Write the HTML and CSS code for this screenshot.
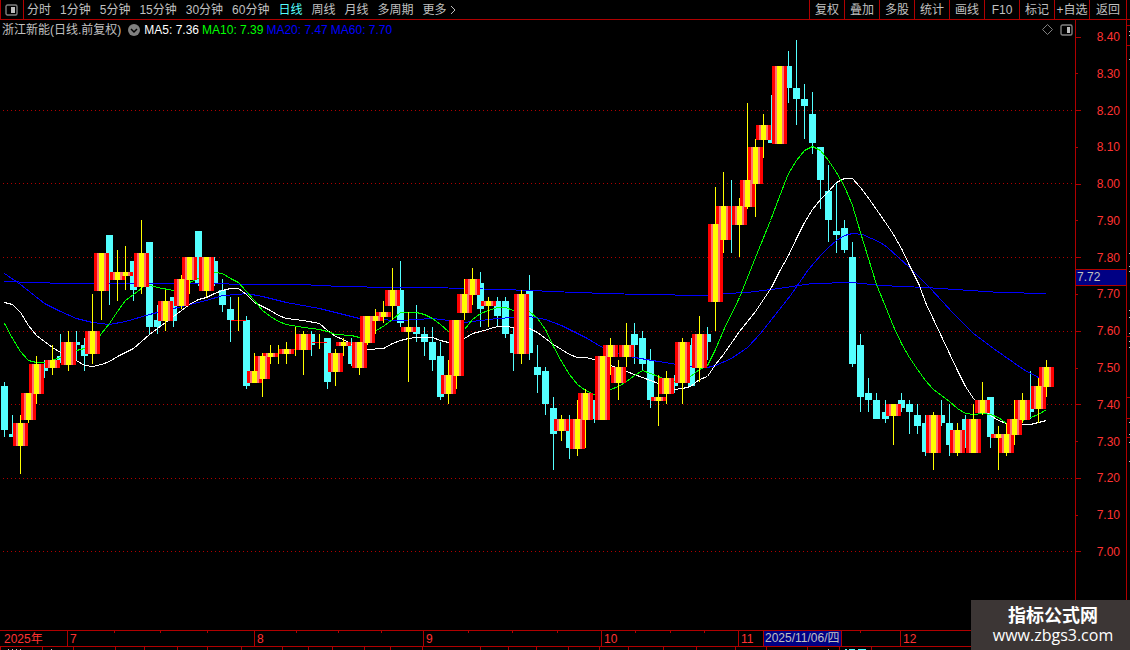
FILE: index.html
```html
<!DOCTYPE html>
<html lang="zh-CN">

<head>
    <meta charset="UTF-8">
    <meta name="viewport" content="width=device-width, initial-scale=1.0">
    <title>浙江新能 日线</title>
    <link rel="stylesheet" href="styles.css">
</head>

<body>
<header class="toolbar">
    <button class="panel-btn" aria-label="侧栏">
        <svg width="13" height="12" viewBox="0 0 13 12"><rect x="1" y="1" width="11" height="10" rx="1.5" fill="none" stroke="#808080" stroke-width="1.4"/><rect x="6" y="3" width="4" height="6" fill="#c0c0c0"/></svg>
    </button>
    <nav class="periods">
        <button>分时</button>
        <button>1分钟</button>
        <button>5分钟</button>
        <button>15分钟</button>
        <button>30分钟</button>
        <button>60分钟</button>
        <button class="active">日线</button>
        <button>周线</button>
        <button>月线</button>
        <button>多周期</button>
        <button class="more">更多<svg width="6" height="10" viewBox="0 0 6 10"><path d="M1 1l4 4-4 4" fill="none" stroke="#c0c0c0"/></svg></button>
    </nav>
    <div class="tools">
        <button>复权</button>
        <button>叠加</button>
        <button>多股</button>
        <button>统计</button>
        <button>画线</button>
        <button>F10</button>
        <button>标记</button>
        <button>+自选</button>
        <button>返回</button>
    </div>
</header>

<main class="main">
    <section class="chart">
        <svg id="plot" viewBox="0 20 1075 610" preserveAspectRatio="none"></svg>
        <div class="legend">
            <span class="stock">浙江新能(日线.前复权)</span>
            <svg class="arrow" width="12" height="12" viewBox="0 0 12 12"><circle cx="6" cy="6" r="6" fill="#808080"/><path d="M3 5l3 3 3-3" fill="none" stroke="#000" stroke-width="1.5"/></svg>
            <span class="ma5">MA5: 7.36</span>
            <span class="ma10">MA10: 7.39</span>
            <span class="ma20">MA20: 7.47</span>
            <span class="ma60">MA60: 7.70</span>
        </div>
        <div class="corner">
            <svg width="11" height="11" viewBox="0 0 11 11"><path d="M5.5 .5l5 5-5 5-5-5z" fill="none" stroke="#808080"/></svg>
            <svg width="13" height="12" viewBox="0 0 13 12"><rect x="1" y="1" width="11" height="10" rx="1.5" fill="none" stroke="#808080" stroke-width="1.4"/><rect x="7" y="3" width="3" height="6" fill="#c0c0c0"/></svg>
        </div>
    </section>
    <aside class="prices">
        <ul>
            <li class="major">8.40</li>
            <li>8.30</li>
            <li class="major">8.20</li>
            <li>8.10</li>
            <li class="major">8.00</li>
            <li>7.90</li>
            <li class="major">7.80</li>
            <li>7.70</li>
            <li class="major">7.60</li>
            <li>7.50</li>
            <li class="major">7.40</li>
            <li>7.30</li>
            <li class="major">7.20</li>
            <li>7.10</li>
            <li class="major">7.00</li>
        </ul>
        <div class="price-tag">7.72</div>
    </aside>
    <svg class="edge" id="edge" width="3" height="610" viewBox="0 20 3 610"></svg>
</main>

<div class="dates">
    <span>2025年</span>
    <span>7</span>
    <span>8</span>
    <span>9</span>
    <span>10</span>
    <span>11</span>
    <span>12</span>
    <svg class="ticks" id="date-ticks" viewBox="0 0 1130 15" preserveAspectRatio="none"></svg>
    <div class="date-tag">2025/11/06/四</div>
</div>
<svg class="footer" id="footer" viewBox="0 0 1130 3" preserveAspectRatio="none"></svg>

<div class="watermark">
    <strong>指标公式网</strong>
    <span>www.zbgs3.com</span>
</div>

<script src="chart.js"></script>
</body>

</html>
```
FILE: styles.css
```css
* {
    box-sizing: border-box;
}

body {
    margin: 0;
    height: 100vh;
    display: flex;
    flex-direction: column;
    overflow: hidden;
    background: #000;
    color: #c0c0c0;
    font: 12px/16px "Liberation Sans", "Noto Sans CJK SC", sans-serif;
}

button {
    padding: 0;
    border: none;
    background: none;
    color: inherit;
    font: inherit;
    white-space: nowrap;
    cursor: pointer;
}

svg {
    display: block;
    flex: none;
}

.toolbar {
    display: flex;
    height: 20px;
    flex: none;
    border-bottom: 1px solid #b00000;
}

.panel-btn {
    width: 24px;
    padding-left: 4px;
    border-left: 1px solid #b00000;
    border-right: 1px solid #b00000;
}

.periods {
    display: flex;
    gap: 9px;
    padding-left: 3px;
}

.periods .active {
    color: #54ffff;
}

.periods .more {
    display: flex;
    align-items: center;
    gap: 3px;
}

.tools {
    display: flex;
    margin-left: auto;
    margin-right: 3px;
    border-right: 1px solid #b00000;
}

.tools button {
    width: 35px;
    border-left: 1px solid #b00000;
}

.tools button:last-child {
    width: 37px;
}

.main {
    display: flex;
    flex: 1;
    min-height: 0;
}

.chart {
    position: relative;
    flex: 1;
    min-width: 0;
}

#plot {
    width: 100%;
    height: 100%;
    shape-rendering: crispEdges;
}

.legend {
    position: absolute;
    top: 2px;
    left: 2px;
    display: flex;
    align-items: center;
    gap: 3px;
    white-space: nowrap;
}

.arrow {
    margin: 0 1px 0 4px;
}

.ma5 {
    color: #fff;
}

.ma10 {
    color: #00ff00;
}

.ma20,
.ma60 {
    color: #0000ff;
}

.corner {
    position: absolute;
    top: 4px;
    right: 2px;
    display: flex;
    gap: 7px;
}

.prices {
    position: relative;
    width: 52px;
    flex: none;
    border-left: 1px solid #b00000;
    border-right: 1px solid #b00000;
    color: #ff3232;
}

.prices ul {
    display: flex;
    flex-direction: column;
    justify-content: space-between;
    height: 100%;
    margin: 0;
    padding: 9px 6px 70px 0;
    list-style: none;
}

.prices li {
    display: flex;
    align-items: center;
    justify-content: space-between;
}

.prices li::before {
    content: "";
    width: 2px;
    height: 1px;
    background: #b00000;
}

.prices .major::before {
    width: 5px;
}

.price-tag {
    position: absolute;
    top: 249px;
    left: 0;
    right: 0;
    padding-left: 1px;
    border-top: 1px solid #b00000;
    border-bottom: 1px solid #b00000;
    background: #000084;
    color: #c0c0c0;
    line-height: 15px;
}

.edge,
.footer,
.ticks {
    shape-rendering: crispEdges;
}

.dates {
    position: relative;
    display: grid;
    grid-template-columns: 67fr 187fr 169fr 178fr 137fr 162fr 230fr;
    flex: none;
    height: 17px;
    border-top: 1px solid #b00000;
    border-bottom: 1px solid #b00000;
    color: #ff3232;
    line-height: 16px;
}

.dates span {
    height: 15px;
    justify-self: start;
    padding-left: 2px;
    border-left: 1px solid #b00000;
}

.dates span:first-child {
    padding-left: 4px;
    border-left: none;
}

.ticks {
    position: absolute;
    width: 100%;
    height: 15px;
}

.date-tag {
    position: absolute;
    left: 763px;
    padding: 0 1px;
    border-left: 1px solid #b00000;
    border-right: 1px solid #b00000;
    background: #000084;
    color: #c0c0c0;
    line-height: 15px;
}

.footer {
    width: 100%;
    height: 3px;
}

.watermark {
    position: absolute;
    right: 0;
    bottom: 0;
    display: flex;
    flex-direction: column;
    align-items: center;
    width: 159px;
    padding: 4px 0 5px 5px;
    background: #3c3635;
    color: #fff;
    font: 16px/20px "Open Sans", "Noto Sans CJK SC", sans-serif;
}

.watermark strong {
    font: bold 18px/21px "Noto Sans CJK SC", sans-serif;
}
```
FILE: chart.js
```js
// [up, high, body top, body bottom, low]
const candles = [
    [0, 382, 386, 430, 437], [0, 415, 434, 437, 437], [1, 415, 423, 446, 474], [1, 393, 393, 420, 423],
    [1, 356, 364, 394, 404], [0, 360, 368, 371, 378], [1, 345, 360, 368, 375], [0, 334, 356, 363, 363],
    [1, 331, 342, 365, 371], [0, 331, 342, 345, 360], [0, 338, 345, 356, 371], [1, 294, 331, 354, 364],
    [1, 253, 253, 291, 320], [0, 235, 235, 272, 305], [1, 250, 272, 280, 301], [1, 246, 272, 276, 290],
    [0, 261, 261, 290, 301], [1, 220, 253, 287, 294], [0, 242, 242, 327, 334], [0, 305, 320, 327, 334],
    [1, 290, 301, 321, 331], [0, 297, 297, 321, 327], [1, 275, 279, 306, 309], [1, 257, 257, 280, 294],
    [0, 231, 231, 283, 286], [1, 257, 257, 291, 297], [0, 257, 261, 283, 286], [0, 279, 290, 305, 312],
    [0, 297, 309, 320, 342], [1, 297, 320, 321, 331], [0, 316, 320, 386, 389], [1, 353, 371, 383, 383],
    [1, 353, 356, 379, 397], [1, 345, 353, 357, 364], [1, 345, 353, 354, 364], [1, 342, 349, 354, 364],
    [1, 327, 349, 350, 356], [1, 331, 334, 350, 375], [0, 331, 334, 345, 356], [1, 334, 342, 343, 349],
    [0, 338, 338, 382, 389], [1, 349, 353, 372, 386], [1, 338, 342, 346, 356], [0, 338, 342, 364, 366],
    [1, 342, 342, 368, 375], [1, 316, 316, 343, 345], [1, 309, 316, 321, 334], [1, 301, 312, 317, 323],
    [1, 268, 290, 306, 320], [0, 261, 290, 323, 327], [1, 312, 327, 332, 382], [0, 305, 327, 334, 342],
    [0, 327, 334, 342, 356], [0, 327, 342, 360, 371], [0, 342, 356, 397, 400], [1, 360, 375, 394, 404],
    [1, 320, 320, 376, 389], [1, 279, 294, 313, 320], [1, 268, 279, 295, 305], [0, 272, 283, 309, 327],
    [1, 297, 301, 306, 327], [0, 297, 301, 316, 327], [0, 297, 301, 334, 338], [0, 328, 334, 353, 371],
    [1, 290, 294, 354, 364], [0, 275, 290, 353, 360], [0, 345, 367, 375, 393], [0, 367, 371, 404, 415],
    [0, 397, 408, 434, 470], [1, 415, 419, 431, 441], [0, 415, 419, 448, 459], [1, 400, 419, 449, 456],
    [1, 389, 393, 420, 448], [0, 400, 400, 419, 423], [1, 356, 356, 420, 420], [1, 338, 345, 357, 375],
    [1, 360, 367, 383, 400], [1, 323, 345, 357, 367], [0, 323, 334, 345, 364], [0, 331, 338, 364, 371],
    [0, 349, 360, 400, 408], [1, 375, 397, 401, 426], [1, 371, 378, 394, 404], [0, 375, 378, 386, 393],
    [1, 338, 342, 383, 404], [0, 338, 345, 386, 386], [1, 316, 334, 368, 382], [0, 327, 334, 342, 360],
    [1, 187, 224, 302, 331], [1, 172, 206, 240, 253], [0, 180, 206, 207, 253], [1, 198, 206, 225, 257],
    [1, 103, 180, 207, 209], [1, 139, 147, 184, 217], [1, 114, 125, 140, 158], [0, 95, 140, 143, 143],
    [1, 66, 66, 144, 144], [0, 51, 66, 88, 103], [0, 40, 88, 99, 125], [0, 84, 99, 106, 139],
    [0, 92, 114, 143, 154], [0, 147, 147, 180, 209], [0, 165, 191, 220, 242], [0, 183, 231, 235, 253],
    [0, 220, 228, 250, 253], [0, 242, 257, 364, 367], [0, 334, 345, 397, 412], [0, 378, 393, 400, 412],
    [0, 393, 400, 419, 419], [0, 400, 412, 419, 423], [1, 404, 404, 416, 445], [0, 393, 400, 408, 412],
    [0, 400, 404, 412, 434], [0, 404, 415, 426, 434], [0, 415, 423, 452, 456], [1, 412, 415, 453, 470],
    [0, 400, 415, 423, 426], [0, 404, 423, 445, 456], [1, 423, 430, 453, 456], [0, 415, 419, 448, 448],
    [1, 404, 419, 453, 453], [1, 382, 400, 413, 415], [0, 397, 397, 437, 448], [1, 426, 434, 438, 470],
    [1, 423, 434, 453, 456], [1, 400, 419, 435, 445], [1, 393, 400, 420, 423], [0, 371, 408, 412, 419],
    [1, 378, 386, 409, 423], [1, 360, 367, 387, 397]
];

const lines = [
    ['#0000ff', '4,281 33,282 65,283 214,283 243,284 300,284 340,286 392,287 430,287 500,289 530,290 575,292 640,294 708,295 724,293 747,292 771,289 812,283 852,282 880,285 925,287 970,290 1000,292 1046,293'],
    ['#0000ff', '4,273 20,284 44,303 60,311 76,318 92,322 109,324 125,321 149,314 173,308 206,300 222,295 238,294 246,293 262,296 286,302 319,308 335,312 359,318 375,319 400,320 432,318 464,322 480,320 497,318 529,316 545,319 561,325 585,337 602,347 618,353 634,357 658,361 682,365 707,367 715,365 731,358 747,347 760,333 790,295 808,269 820,255 828,247 836,240 844,235 852,233 862,234 880,242 887,247 909,267 930,288 953,313 973,333 993,348 1023,369 1038,377 1046,378'],
    ['#ffffff', '4,302 12,304 20,312 28,325 36,335 44,341 52,347 60,352 68,357 76,360 84,365 92,366 101,364 109,361 117,356 125,352 133,348 141,341 149,334 157,328 165,322 173,316 181,310 189,304 198,299 206,297 214,293 222,290 230,288 238,288 246,294 254,302 262,306 270,310 278,315 286,318 303,320 319,323 327,330 335,336 343,339 351,344 359,350 367,349 383,348 392,343 400,340 408,338 416,337 432,337 440,340 448,342 456,342 464,338 472,333 480,331 497,326 505,326 513,327 529,328 537,332 545,338 553,344 561,349 569,354 577,357 585,357 594,359 602,361 610,365 626,371 634,374 642,377 650,380 658,383 674,389 682,388 690,386 699,379 707,376 715,364 723,354 739,331 755,311 771,287 779,271 788,255 796,238 804,222 812,209 820,199 828,191 836,182 844,178 852,178 860,187 869,199 885,222 893,234 901,248 909,265 919,285 925,302 933,319 941,336 949,353 957,370 965,386 973,398 982,406 990,415 998,420 1006,423 1022,424 1030,424 1038,422 1046,420'],
    ['#00ff00', '4,323 12,338 20,351 28,360 36,362 44,362 54,359 68,354 76,350 84,348 92,345 101,333 109,323 117,311 125,300 133,294 146,284 157,287 173,290 180,289 189,282 198,278 214,272 222,273 230,278 238,282 246,291 254,300 262,310 270,316 278,321 286,324 303,327 319,329 327,331 335,334 351,335 359,337 376,330 384,325 392,319 400,312 416,312 424,314 432,318 440,324 448,331 456,334 464,329 472,319 480,313 488,310 497,307 505,307 513,310 529,311 537,318 545,329 553,346 561,361 569,374 577,384 585,390 594,394 602,394 610,389 618,386 626,381 634,375 642,370 650,373 658,376 666,380 674,381 682,380 690,376 699,369 707,365 715,349 723,330 739,297 755,257 770,220 779,196 788,173 796,160 804,150 812,146 820,150 828,160 836,172 844,186 852,205 860,232 868,258 876,284 885,306 893,326 901,343 909,357 917,369 925,380 933,389 941,395 949,401 957,408 965,413 973,414 982,413 990,414 998,417 1006,423 1014,422 1022,420 1038,414 1046,409']
];

const rect = (x, y, w, h, fill) => `<rect x="${x}" y="${y}" width="${w}" height="${h}" fill="${fill}"/>`;

function drawPlot() {
    let html = '';
    [110, 183, 257, 331, 404, 478, 551].forEach(y => {
        html += `<path d="M3 ${y + 0.5}H1075" stroke="#b00000" stroke-dasharray="1 3"/>`;
    });

    // layers, from back to front
    let down = '', red = '', pink = '', yellow = '';
    candles.forEach(([up, high, top, bottom, low], i) => {
        const x = Math.floor(4.04 + i * 8.0826);
        const h = bottom - top;
        if (up) {
            red += rect(x - 7, top, 15, h, '#ff0000');
            if (h > 1) {
                pink += rect(x - 4, top, 9, h, '#ff7070');
                yellow += rect(x - 2, top, 5, h, '#ffff00');
            }
            yellow += rect(x, high, 1, low - high, '#ffff00');
        } else {
            down += rect(x - 3, top, 7, h, '#54ffff') + rect(x, high, 1, low - high, '#54ffff');
        }
    });

    html += down;
    lines.forEach(([color, points]) => {
        html += `<polyline points="${points}" transform="translate(.5 .5)" fill="none" stroke="${color}"/>`;
    });
    document.getElementById('plot').innerHTML = html + red + pink + yellow;
}

function drawTicks() {
    const weeks = [114, 160, 207, 296, 338, 381, 468, 512, 557, 635, 670, 704, 860];
    document.getElementById('date-ticks').innerHTML = weeks.map(x => rect(x, 0, 1, 2, '#b00000')).join('');

    const footer = [0, 42, 73, 115, 144, 177, 207, 241, 282, 308, 332, 364, 390, 422, 480, 508, 536, 568, 599, 628, 663, 696, 735, 766, 807, 839, 871];
    let html = footer.map(x => rect(x, 0, 1, 3, '#b00000')).join('');
    [8, 12, 16, 20, 51, 828].forEach(x => html += rect(x, 2, 1, 1, '#c0c0c0'));
    html += rect(845, 2, 2, 1, '#54ffff') + rect(849, 2, 6, 1, '#54ffff') + rect(858, 2, 8, 1, '#54ffff');
    document.getElementById('footer').innerHTML = html;

    html = [25, 45, 336, 397, 418, 437].map(y => rect(0, y, 3, 1, '#b00000')).join('');
    [31, 35, 59, 253, 266, 271, 310, 317, 333, 341, 347, 422, 434, 442, 461].forEach(y => html += rect(2, y, 1, 1, '#c0c0c0'));
    document.getElementById('edge').innerHTML = html;
}

drawPlot();
drawTicks();
```
